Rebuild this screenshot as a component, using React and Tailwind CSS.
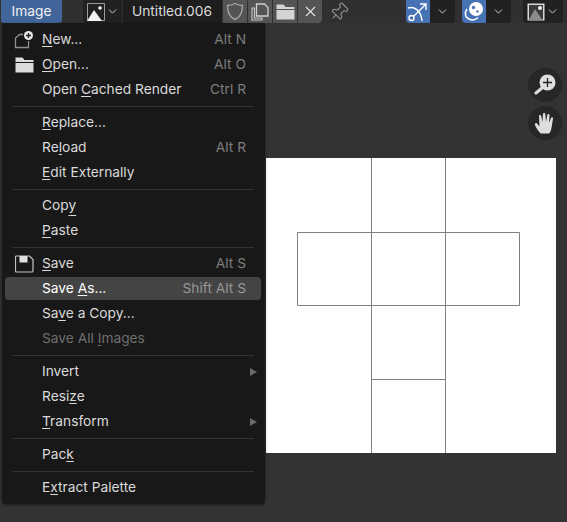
import React from 'react'
import { ChevronDown, X, Pin } from 'lucide-react'

const NewIcon = () => (
    <svg width="20" height="18" viewBox="0 0 20 18" fill="none">
        <path d="M9 3.500H5.500L1.500 7v9.500h13V10" stroke="#8f8f8f" strokeWidth="1.300" />
        <circle cx="14.500" cy="4.500" r="4.500" fill="#e6e6e6" />
        <path d="M14.500 2v5M12 4.500h5" stroke="#222" strokeWidth="1.300" />
    </svg>
)

const FolderIcon = ({ color = '#dcdcdc' }) => (
    <svg width="19" height="16" viewBox="0 0 19 16">
        <path d="M0.500 0.500h7l2 2.500h9v2H0.500z" fill={color} />
        <path d="M0.500 6h18v9.500H0.500z" fill={color} />
    </svg>
)

const SaveIcon = () => (
    <svg width="19" height="18" viewBox="0 0 19 18" fill="none">
        <path d="M1.500 1h13l3.500 3.500v11.500a1 1 0 0 1-1 1H1.500a1 1 0 0 1-1-1V2a1 1 0 0 1 1-1z" stroke="#c4c4c4" strokeWidth="1.200" />
        <path d="M4.500 1h8v6.500h-8z" fill="#e0e0e0" />
    </svg>
)

const ImageIcon = () => (
    <svg width="18" height="18" viewBox="0 0 18 18">
        <path d="M0.500 0.500h17v17h-17z" fill="none" stroke="#9c9c9c" />
        <path d="M0 18L7 7l8 11z" fill="#f2f2f2" />
        <circle cx="13" cy="5" r="1.800" fill="#f2f2f2" />
    </svg>
)

const ShieldIcon = () => (
    <svg width="18" height="19" viewBox="0 0 18 19" fill="none">
        <path d="M9 1.500c2.500 1.500 5 2 7.500 2 0 6.500-1.500 11.500-7.500 14C3 15 1.500 10 1.500 3.500c2.500 0 5-.5 7.500-2z" stroke="#a2a2a2" strokeWidth="1.400" />
    </svg>
)

const CopyIcon = () => (
    <svg width="18" height="18" viewBox="0 0 18 18" fill="none">
        <path d="M5.500 13V1h8l3.500 3.500V13z" fill="none" stroke="#cfcfcf" strokeWidth="1.300" />
        <path d="M3.500 5H1v12h10v-2H3.500z" fill="none" stroke="#c4c4c4" strokeWidth="1.200" />
    </svg>
)

const CurveIcon = () => (
    <svg width="22" height="20" viewBox="0 0 22 20" fill="none">
        <path d="M1 6c6-2 13 2 14 13" stroke="#fff" strokeWidth="1.400" />
        <path d="M6 15L19 2M13 2h6v6" stroke="#fff" strokeWidth="1.400" />
        <circle cx="4.500" cy="16" r="2.500" stroke="#fff" strokeWidth="1.400" />
    </svg>
)

const SphereIcon = () => (
    <svg width="22" height="22" viewBox="0 0 22 22" fill="none">
        <circle cx="13" cy="8" r="7" fill="#fff" />
        <circle cx="10.500" cy="6.500" r="1.700" fill="#4772b3" />
        <circle cx="14.500" cy="10.500" r="1.200" fill="#4772b3" />
        <path d="M4 8c-3 4-2 9 3 10.500 3 1 6 0 8-2" stroke="#fff" strokeWidth="1.500" />
    </svg>
)

const AlphaIcon = () => (
    <svg width="18" height="18" viewBox="0 0 18 18">
        <path d="M0.500 0.500h17v17h-17z" fill="#d8d8d8" />
        <path d="M2 16.500V2h14v14.500z" fill="#3a3a3a" />
        <path d="M2 16.500L8 6l7 10.500z" fill="#8c8c8c" />
        <circle cx="13" cy="5" r="2" fill="#f0f0f0" />
    </svg>
)

const ZoomIcon = () => (
    <svg width="22" height="22" viewBox="0 0 22 22" fill="none">
        <circle cx="13.500" cy="8.500" r="8" fill="#dedede" />
        <path d="M13.500 4v9M9 8.500h9" stroke="#222" strokeWidth="1.300" />
        <path d="M8 14l-6 5" stroke="#dedede" strokeWidth="3" strokeLinecap="round" />
    </svg>
)

const HandIcon = () => (
    <svg width="22" height="23" viewBox="0 0 22 23" fill="#dedede">
        <path d="M7 21.500c-2-1-5-6-6-8.500-.5-1.500 1-2.500 2-1.500l2.500 3L5 4c0-1.500 2-1.500 2.200 0L8.500 10 9 2c0-1.500 2.200-1.500 2.300 0l.7 8 1.300-7c.3-1.500 2.300-1.200 2.200.3L15 11l2-5c.5-1.300 2.300-.8 2 .7l-1.500 9c-.5 3-1.500 5-2.500 5.800z" />
    </svg>
)

const UvLayout = () => (
    <svg width="290" height="295" viewBox="0 0 290 295" fill="none" stroke="#808080" strokeWidth="1">
        <path d="M105.500 0v295M179.500 0v295M31.500 74.500h222v73h-222zM105.500 221.500h74" />
    </svg>
)

const Sep = () => <div className="mx-[7px] flex h-[8px] items-center"><div className="h-px w-full bg-[#333333]" /></div>

const Key = ({ children, low }) => (
    <span className={`underline decoration-1 [text-decoration-skip-ink:none] ${low ? 'underline-offset-[5px]' : 'underline-offset-[2px]'}`}>{children}</span>
)

const Row = ({ icon, label, shortcut, arrow, active, disabled }) => (
    <div className="relative h-[25px] py-px">
        <div className={`flex h-[23px] items-center rounded-[4px] pl-[37px] pr-[15px] ${active ? 'bg-[#444444] text-white' : ''} ${disabled ? 'text-[#6e6e6e]' : ''}`}>
            {icon && <span className="absolute left-[9px] flex w-[20px] justify-center">{icon}</span>}
            <span className="flex-1">{label}</span>
            {shortcut && <span className={active ? 'text-[#969696]' : 'text-[#7d7d7d]'}>{shortcut}</span>}
            {arrow && <span className="-mr-[11px] h-0 w-0 border-y-[4px] border-l-[7px] border-y-transparent border-l-[#6b6b6b]" />}
        </div>
    </div>
)

const Gizmo = ({ children }) => (
    <div className="flex size-[34px] items-center justify-center rounded-full bg-[#272727]">{children}</div>
)

const Drop = ({ className = '' }) => (
    <span className={`flex h-[23px] items-center justify-center bg-[#212121] ${className}`}>
        <ChevronDown size={13} color="#d0d0d0" strokeWidth={1.8} />
    </span>
)

const ToolBtn = ({ children, className = '' }) => (
    <span className={`flex h-[23px] w-[24px] items-center justify-center bg-[#545454] ${className}`}>{children}</span>
)

export default function App() {
    return (
        <div className="relative h-[522px] w-[567px] overflow-hidden bg-[#333333] text-[13.75px] text-[#dadada]" style={{ fontFamily: 'Inter, "Noto Sans", sans-serif' }}>
            <header className="flex h-[23px] items-center bg-[#303030] pl-[1px]">
                <span className="flex h-[23px] w-[61px] items-center justify-center rounded-b-[3px] bg-[#41659b] text-[#f0f0f0]">Image</span>
                <div className="ml-[21px] flex h-[23px] w-[39px] items-center justify-center gap-[1px] rounded-bl-[4px] bg-[#212121]">
                    <ImageIcon />
                    <ChevronDown size={13} color="#d0d0d0" strokeWidth={1.8} />
                </div>
                <span className="ml-px flex h-[23px] w-[99px] items-center bg-[#1d1d1d] pl-[9px] text-[#dcdcdc]">Untitled.006</span>
                <div className="ml-px flex gap-px">
                    <ToolBtn><ShieldIcon /></ToolBtn>
                    <ToolBtn><CopyIcon /></ToolBtn>
                    <ToolBtn><FolderIcon color="#d4d4d4" /></ToolBtn>
                    <ToolBtn className="rounded-br-[4px]"><X size={17} color="#e6e6e6" strokeWidth={1.5} /></ToolBtn>
                </div>
                <span className="ml-[5px] flex w-[24px] justify-center"><Pin size={20} color="#8c8c8c" strokeWidth={1.4} className="rotate-45" /></span>
                <div className="ml-[55px] flex">
                    <span className="flex h-[23px] w-[24px] items-center justify-center rounded-bl-[4px] bg-[#4772b3]"><CurveIcon /></span>
                    <Drop className="w-[25px] rounded-br-[4px]" />
                </div>
                <div className="ml-[7px] flex">
                    <span className="flex h-[23px] w-[24px] items-center justify-center rounded-bl-[4px] bg-[#4772b3]"><SphereIcon /></span>
                    <Drop className="w-[25px] rounded-br-[4px]" />
                </div>
                <div className="ml-[12px] flex h-[23px] w-[40px] items-center justify-center gap-[1px] rounded-b-[4px] bg-[#212121]">
                    <AlphaIcon />
                    <ChevronDown size={13} color="#d0d0d0" strokeWidth={1.8} />
                </div>
            </header>

            {/* image in the editor area */}
            <div className="absolute left-[266px] top-[158px] h-[295px] w-[290px] bg-white">
                <UvLayout />
            </div>

            <div className="absolute left-[528px] top-[68px] flex flex-col gap-[4px]">
                <Gizmo><ZoomIcon /></Gizmo>
                <Gizmo><HandIcon /></Gizmo>
            </div>

            <div className="absolute left-[2px] top-[23px] w-[263px] rounded-b-[4px] bg-[#181818] py-[4px] pl-[3px] pr-[4px] shadow-[0_1px_3px_rgba(0,0,0,0.5)]">
                <Row icon={<NewIcon />} label={<><Key>N</Key>ew...</>} shortcut="Alt N" />
                <Row icon={<FolderIcon />} label={<><Key>O</Key>pen...</>} shortcut="Alt O" />
                <Row label={<>Open <Key>C</Key>ached Render</>} shortcut="Ctrl R" />
                <Sep />
                <Row label={<><Key>R</Key>eplace...</>} />
                <Row label={<>Re<Key>l</Key>oad</>} shortcut="Alt R" />
                <Row label={<><Key>E</Key>dit Externally</>} />
                <Sep />
                <Row label={<>Cop<Key low>y</Key></>} />
                <Row label={<><Key>P</Key>aste</>} />
                <Sep />
                <Row icon={<SaveIcon />} label={<><Key>S</Key>ave</>} shortcut="Alt S" />
                <Row active label={<>Save <Key>A</Key>s...</>} shortcut="Shift Alt S" />
                <Row label={<>Sa<Key>v</Key>e a Copy...</>} />
                <Row disabled label={<>Save All <Key>I</Key>mages</>} />
                <Sep />
                <Row label="Invert" arrow />
                <Row label={<>Resi<Key>z</Key>e</>} />
                <Row label={<><Key>T</Key>ransform</>} arrow />
                <Sep />
                <Row label={<>Pac<Key>k</Key></>} />
                <Sep />
                <Row label={<>E<Key>x</Key>tract Palette</>} />
            </div>
        </div>
    )
}
